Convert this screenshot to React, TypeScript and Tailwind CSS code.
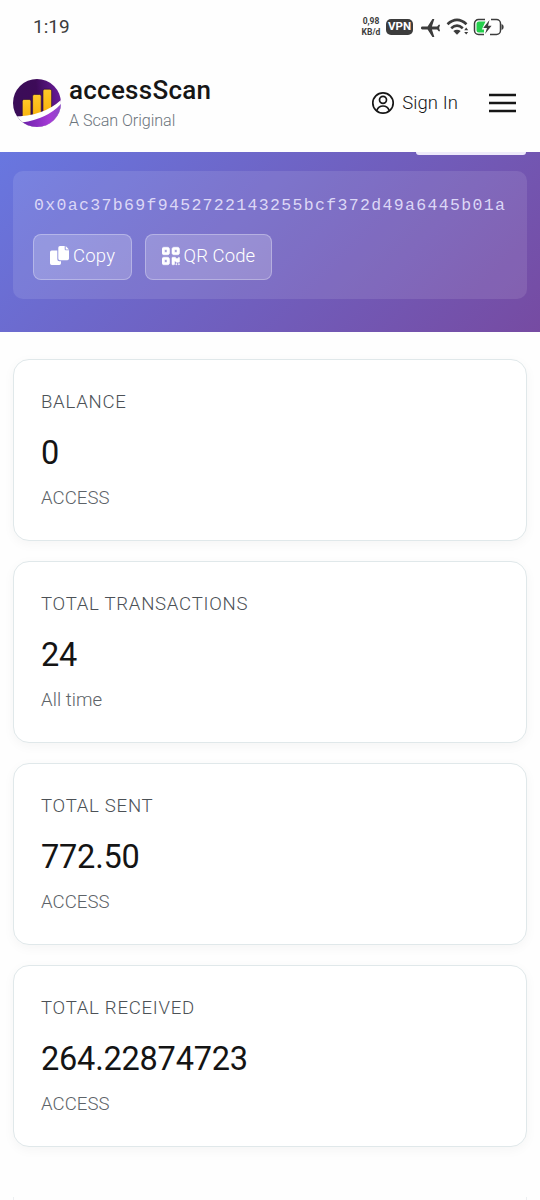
import React from "react";
import { FaQrcode } from "react-icons/fa6";
import { MdFlight } from "react-icons/md";

const stats = [
  { label: "BALANCE", value: "0", note: "ACCESS" },
  { label: "TOTAL TRANSACTIONS", value: "24", note: "All time" },
  { label: "TOTAL SENT", value: "772.50", note: "ACCESS" },
  { label: "TOTAL RECEIVED", value: "264.22874723", note: "ACCESS" },
];

function Logo() {
  return (
    <svg viewBox="0 0 48 48" className="h-12 w-12 shrink-0">
      <defs>
        <linearGradient id="disc" x1="0" y1="0.4" x2="1" y2="0.3">
          <stop offset="0" stopColor="#3a0d58" />
          <stop offset="0.5" stopColor="#3d0b58" />
          <stop offset="1" stopColor="#6a1c9c" />
        </linearGradient>
        <linearGradient id="base" x1="0" y1="0" x2="1" y2="0">
          <stop offset="0" stopColor="#6a1fa8" />
          <stop offset="0.7" stopColor="#a53ad6" />
          <stop offset="1" stopColor="#8a4cc4" />
        </linearGradient>
        <linearGradient id="bar" x1="0" y1="0" x2="0" y2="1">
          <stop offset="0" stopColor="#ffc928" />
          <stop offset="1" stopColor="#f8ae08" />
        </linearGradient>
        <clipPath id="round"><circle cx="24" cy="24" r="24" /></clipPath>
      </defs>
      <g clipPath="url(#round)">
        <rect width="48" height="48" fill="url(#disc)" />
        <g fill="url(#bar)" stroke="#24063a" strokeWidth="0.6">
          <rect x="9.3" y="20.5" width="8.6" height="22" rx="1.6" />
          <rect x="19.6" y="15.5" width="8.6" height="26" rx="1.6" />
          <rect x="30" y="10.2" width="8.6" height="28" rx="1.6" />
        </g>
        <path d="M0 37.6Q30 37.5 48 21V48H0Z" fill="#fff" />
        <path d="M9 43.5Q34 40 48 25V48H9Z" fill="url(#base)" />
      </g>
    </svg>
  );
}

function CopyIcon() {
  return (
    <svg viewBox="0 0 19 19" className="mb-[3px] h-[19px] w-[19px] shrink-0" fill="currentColor">
      <path d="M7.3 4.5H1.7Q0 4.5 0 6.2V17.3Q0 19 1.7 19H9.3Q11 19 11 17.3V15.3H9.3Q7.3 15.3 7.3 13.3Z" />
      <path d="M10 0H14.7V3.2Q14.7 4.3 15.8 4.3H19V12.6Q19 14.3 17.3 14.3H10Q8.3 14.3 8.3 12.6V1.7Q8.3 0 10 0ZM15.7 0L19 3.4H15.7Z" />
    </svg>
  );
}

function StatusBar() {
  return (
    <div className="flex h-[54px] shrink-0 items-center justify-between pl-[33px] pr-[36px] text-[#3c3c3c]">
      <span className="text-[19px] leading-6">1:19</span>
      <div className="flex items-center">
        <div className="mr-[5px] w-5 text-center text-[8.5px] font-bold leading-[11px]">
          <div>0,98</div>
          <div>KB/d</div>
        </div>
        <span className="mr-[6px] flex h-4 w-[27px] items-center justify-center rounded-[5px] bg-[#3c3c3c] text-[11.5px] font-bold text-white">VPN</span>
        <MdFlight className="mr-[4px] h-[23px] w-[23px] -rotate-90" />
        <svg viewBox="0 0 24 18" className="mr-[3px] h-[18px] w-6" fill="none" stroke="currentColor">
          <path d="M1.5 6.2Q11 -2.3 20.5 6.2M5.2 10.2Q11 5.2 16.8 10.2" strokeWidth="2.7" />
          <path d="M7.3 12.9Q11 10.5 14.7 12.9L11 16.8Z" fill="currentColor" stroke="none" />
          <path d="M20.2 9.6L22.2 12.2H18.2ZM20.2 16.6L18.2 13.9H22.2Z" fill="currentColor" stroke="none" />
        </svg>
        <svg viewBox="0 0 31 18" className="h-[18px] w-[31px]">
          <path d="M12 1.5H5.5A4 4 0 0 0 1.5 5.5V12.5A4 4 0 0 0 5.5 16.5H11M18 1.5H23.5A4 4 0 0 1 27.5 5.5V12.5A4 4 0 0 1 23.5 16.5H17" fill="none" stroke="#3c3c3c" strokeWidth="1.5" />
          <path d="M28.5 6Q30.7 6.5 30.7 9T28.5 12Z" fill="#3c3c3c" />
          <path d="M12.5 3.5H6Q3.5 3.5 3.5 6V12Q3.5 14.5 6 14.5H11V11.5H8.8Z" fill="#24cf4c" />
          <path d="M16.5 2L10.2 10H14L12 16L18.6 7.8H15Z" fill="#3c3c3c" />
        </svg>
      </div>
    </div>
  );
}

function Header() {
  return (
    <header className="flex h-[98px] shrink-0 items-center justify-between pl-[13px] pr-6">
      <div className="flex items-center gap-2">
        <Logo />
        <div className="pt-[2px]">
          <div className="text-[26px] font-medium leading-8 tracking-[0.26px] text-[#161616]">accessScan</div>
          <div className="mt-[2px] text-[16.2px] font-light leading-[26px] tracking-[-0.08px] text-[#6c757d]">A Scan Original</div>
        </div>
      </div>
      <div className="flex items-center text-[#161616]">
        <svg viewBox="0 0 24 24" className="mr-[7px] h-6 w-6" fill="none" stroke="currentColor" strokeWidth="1.7">
          <circle cx="12" cy="12" r="10.2" />
          <circle cx="12" cy="8.8" r="3.5" />
          <path d="M5.8 19.5Q7.4 15 12 15T18.2 19.5" />
        </svg>
        <span className="mr-[31px] pb-px text-[18.5px] font-light leading-6 tracking-[0.1px]">Sign In</span>
        <svg viewBox="0 0 27 20" className="h-5 w-[27px]" stroke="currentColor" strokeWidth="2.4">
          <path d="M0 2H27M0 10H27M0 18H27" />
        </svg>
      </div>
    </header>
  );
}

function Hero() {
  return (
    <section className="relative h-[180px] shrink-0 overflow-hidden bg-[linear-gradient(135deg,#667eea_0%,#764ba2_100%)] bg-[length:540px_300px] bg-bottom px-[13px] pt-[19px]">
      <div className="absolute right-[14px] top-0 h-[3px] w-[110px] rounded-b-[6px] bg-[#eeeafa]" />
      <div className="h-32 rounded-[10px] bg-white/10 px-5 pt-[23px]">
        <div className="whitespace-nowrap pl-px font-['Liberation_Mono',monospace] text-[16.5px] leading-6 tracking-[1.34px] text-[#dcd7f6]">0x0ac37b69f9452722143255bcf372d49a6445b01a</div>
        <div className="mt-4 flex gap-[13px] text-[18.5px] font-light text-white">
          <button className="flex h-[46px] w-[99px] items-center gap-1 rounded-lg border border-white/30 bg-white/20 pl-4 tracking-[0.2px]">
            <CopyIcon />
            <span>Copy</span>
          </button>
          <button className="flex h-[46px] w-[127px] items-center gap-1 rounded-lg border border-white/30 bg-white/20 pl-4 tracking-[0.1px]">
            <FaQrcode className="mb-[2px] h-[20px] w-[17.5px]" stroke="currentColor" strokeWidth="14" />
            <span>QR Code</span>
          </button>
        </div>
      </div>
    </section>
  );
}

export default function App() {
  return (
    <div className="flex h-[1200px] w-[540px] flex-col overflow-hidden bg-[#fefefe] font-['Roboto',sans-serif]">
      <StatusBar />
      <Header />
      <Hero />
      <main className="flex flex-col gap-5 px-[13px] pt-[27px]">
        {stats.map((s) => (
          <section key={s.label} className="h-[182px] shrink-0 rounded-2xl border border-[#e0e8ea] bg-white px-[27px] pt-[30px] shadow-[0_3px_12px_rgba(0,0,0,0.04)]">
            <div className="text-[18.6px] font-light leading-6 tracking-[0.72px] text-[#4c5156]">{s.label}</div>
            <div className="mt-[19px] text-[32.5px] leading-10 tracking-[-0.22px] text-[#141414]">{s.value}</div>
            <div className="mt-[13px] text-[18.6px] font-light leading-6 tracking-[0.04px] text-[#5d6368]">{s.note}</div>
          </section>
        ))}
        <section className="mt-[30px] h-10 shrink-0 border-x border-[#eceff1]" />
      </main>
    </div>
  );
}
